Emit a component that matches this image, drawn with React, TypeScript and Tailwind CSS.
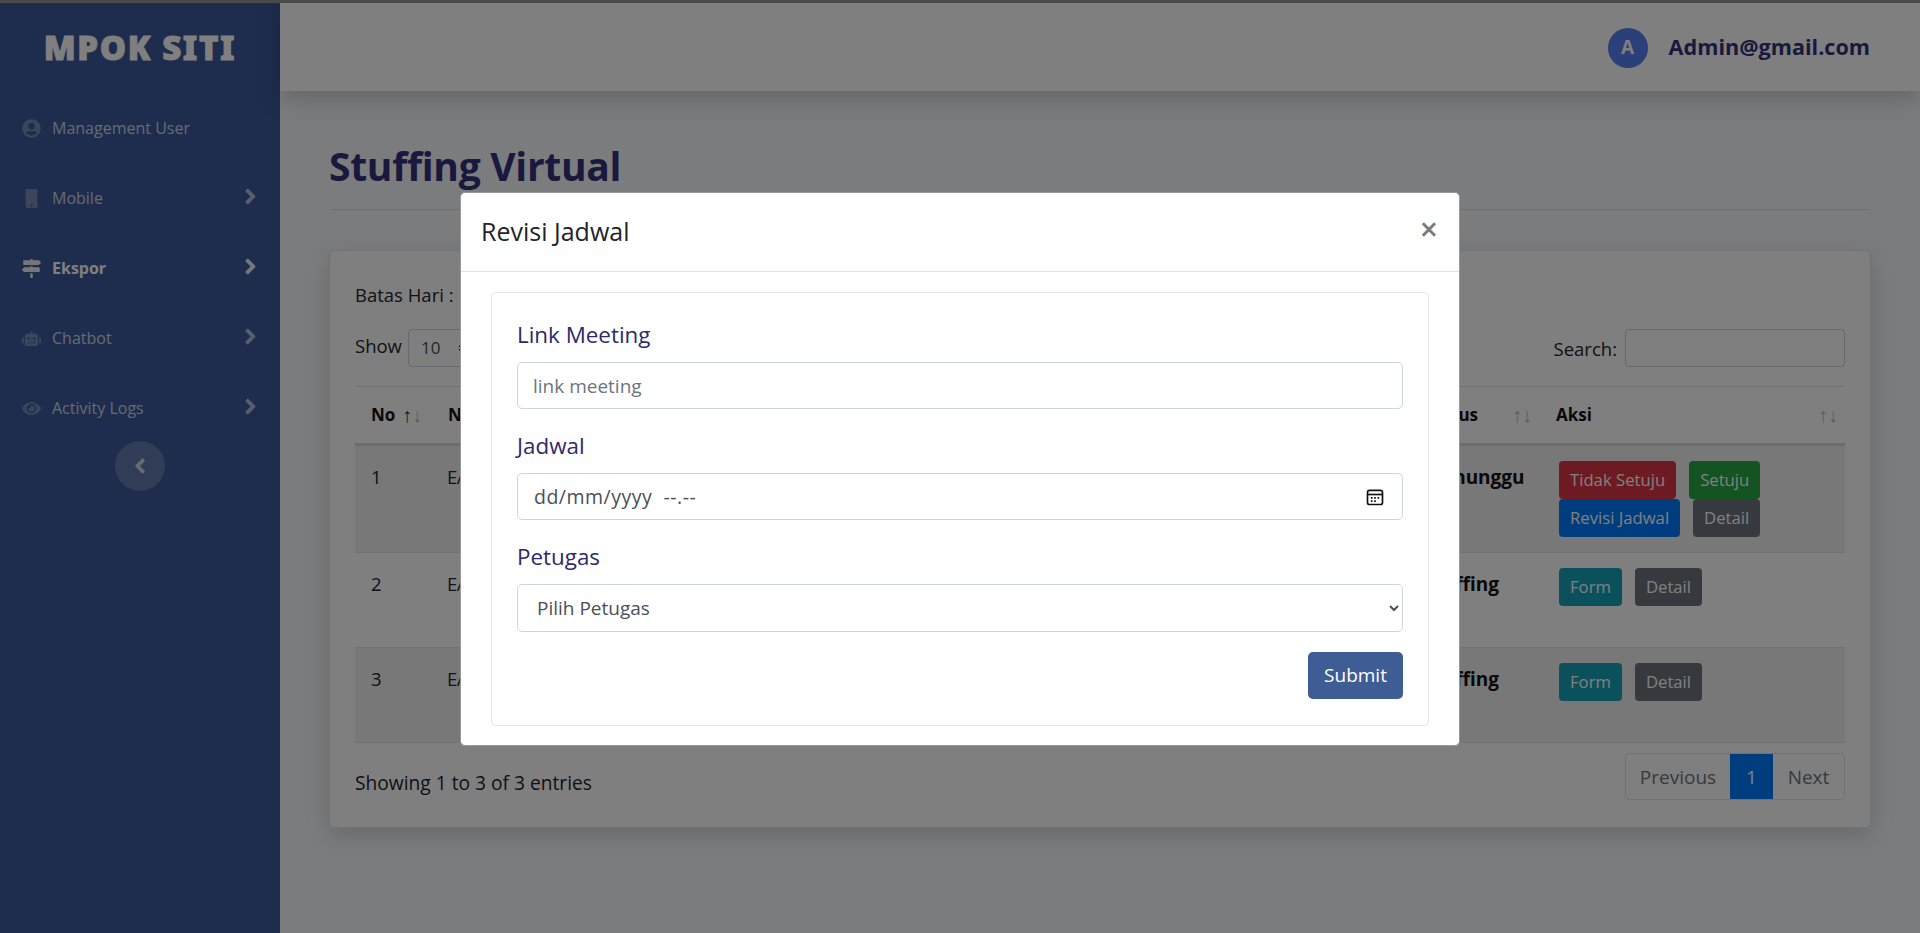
import React from "react";
import { FaUserCircle, FaMobile, FaMapSigns, FaRobot, FaEye, FaAngleRight, FaAngleLeft } from "react-icons/fa";
import { ChevronsUpDown } from "lucide-react";

const font = "[font-family:'Open_Sans','Noto_Sans',sans-serif]";

function NavItem({ icon, label, active, arrow = true }: { icon: React.ReactNode; label: string; active?: boolean; arrow?: boolean }) {
  return (
    <div className="flex h-[70px] items-center pl-[20px] pr-[17px]">
      <span className={`flex w-[22px] justify-center text-[19px] ${active ? "text-white/90" : "text-white/30"}`}>{icon}</span>
      <span className={`ml-[10px] flex-1 text-[16px] ${active ? "font-bold text-white" : "text-white/75"}`}>{label}</span>
      {arrow && <FaAngleRight className={`-mt-[3px] text-[25px] ${active ? "text-white/90" : "text-white/60"}`} />}
    </div>
  );
}

function Btn({ color, children }: { color: string; children: React.ReactNode }) {
  return (
    <span className={`ml-[3px] mr-[10px] inline-flex h-[38px] items-center rounded-[4px] px-[11px] text-[16.7px] text-white ${color}`}>{children}</span>
  );
}

function Sort({ active }: { active?: boolean }) {
  return (
    <span className="flex text-[20px] font-normal leading-none">
      <span className={active ? "text-[#333]" : "text-[#bbb]"}>↑</span>
      <span className="text-[#bbb]">↓</span>
    </span>
  );
}

function Row({ no, kode, status, striped, h, children }: { no: string; kode: string; status: string; striped?: boolean; h: string; children: React.ReactNode }) {
  return (
    <tr className={`border-b border-[#dee2e6] align-top ${h} ${striped ? "bg-[#f1f1f1]" : ""}`}>
      <td className="px-4 pt-[17px] text-[#212529]">{no}</td>
      <td className="pl-[15px] pt-[17px] tracking-[-0.6px] text-[#212529]">{kode}</td>
      <td className="pl-4 pt-[17px] text-[19px] font-bold text-[#111]">{status}</td>
      <td className="px-4 pt-[15px]">
        <div className="flex flex-wrap">{children}</div>
      </td>
    </tr>
  );
}

function Field({ label, children }: { label: string; children: React.ReactNode }) {
  return (
    <div>
      <div className="flex h-[28px] items-center text-[22.4px] font-medium text-[#2e2a6b]">{label}</div>
      <div className="mt-[13px]">{children}</div>
    </div>
  );
}

export default function App() {
  return (
    <div className={`relative h-[933px] w-[1920px] overflow-hidden bg-[#f6f8fb] ${font}`}>
      <div className="h-[3px] bg-[#8c8c8c]" />
      <div className="flex h-[930px]">
        <aside className="w-[280px] shrink-0 bg-[#3c5a9a]">
          <div className="flex h-[90px] items-center justify-center text-[33px] font-black tracking-[1.6px] text-white [-webkit-text-stroke:0.9px_white] [font-family:'Noto_Sans',sans-serif]">MPOK SITI</div>
          <nav className="mt-0">
            <NavItem icon={<FaUserCircle />} label="Management User" arrow={false} />
            <NavItem icon={<FaMobile />} label="Mobile" />
            <NavItem icon={<FaMapSigns />} label="Ekspor" active />
            <NavItem icon={<FaRobot />} label="Chatbot" />
            <NavItem icon={<FaEye />} label="Activity Logs" />
          </nav>
          <div className="mt-[-2px] flex justify-center">
            <div className="flex h-[50px] w-[50px] items-center justify-center rounded-full bg-white/20 text-[24px] text-white/70">
              <FaAngleLeft />
            </div>
          </div>
        </aside>

        <div className="min-w-0 flex-1">
          <header className="flex h-[88px] items-center justify-end bg-white pr-[50px] shadow-[0_8px_24px_rgba(0,0,0,0.18)]">
            <div className="mt-[1px] flex h-[40px] w-[40px] items-center justify-center rounded-full bg-[#567ef0] text-[19px] font-bold text-white">A</div>
            <div className="ml-[21px] text-[21.6px] font-bold text-[#34307a]">Admin@gmail.com</div>
          </header>

          <main className="px-[49px]">
            <div className="flex h-[119px] items-end border-b border-[#dfe1e6] pb-[18px]">
              <h1 className="text-[39px] font-bold leading-[50px] tracking-[-0.3px] text-[#34307a]">Stuffing Virtual</h1>
            </div>

            <section className="mt-[40px] h-[578px] rounded-[5px] border border-[#e3e6ec] bg-white px-[25px] shadow-[0_8px_24px_rgba(0,0,0,0.15)]">
              <div className="pt-[31px] text-[18.5px] leading-[26px] text-[#212529]">Batas Hari :</div>
              <div className="mt-[21px] flex h-[38px] items-center justify-between text-[18.5px] text-[#212529]">
                <div className="flex items-center">
                  <span className="-mt-[4px]">Show</span>
                  <div className="relative ml-[6px]">
                    <select className="h-[38px] w-[120px] appearance-none rounded-[4px] border border-[#ced4da] bg-white pl-[12px] text-[17px] text-[#495057]">
                      <option>10</option>
                    </select>
                    <ChevronsUpDown className="absolute left-[48px] top-[11px] h-[16px] w-[12px] text-[#333]" strokeWidth={3} />
                  </div>
                </div>
                <div className="flex items-center">
                  <span className="mt-[1px]">Search:</span>
                  <input className="ml-[8px] h-[38px] w-[220px] rounded-[4px] border border-[#ced4da] bg-white" />
                </div>
              </div>

              <table className="mt-[19px] w-full table-fixed border-collapse border-t border-[#dee2e6] text-[18.5px]">
                <colgroup>
                  <col className="w-[77px]" />
                  <col className="w-[976px]" />
                  <col className="w-[132px]" />
                  <col />
                </colgroup>
                <thead>
                  <tr className="h-[58px] border-b-[3px] border-[#d6d8db] text-left text-[17px] font-bold text-[#111]">
                    <th className="pl-4 pr-[10px]">
                      <div className="flex items-center justify-between"><span>No</span><Sort active /></div>
                    </th>
                    <th className="pl-4 pr-4"><div className="flex items-center justify-between"><span>Nomor Ekspor</span><Sort /></div></th>
                    <th className="pl-4 pr-[8px]"><div className="flex items-center justify-between"><span>Status</span><Sort /></div></th>
                    <th className="pl-4 pr-[7px]"><div className="flex items-center justify-between"><span>Aksi</span><Sort /></div></th>
                  </tr>
                </thead>
                <tbody>
                  <Row no="1" kode="E/2024/001" status="Menunggu" striped h="h-[108px]">
                    <Btn color="bg-[#dc3545]">Tidak Setuju</Btn>
                    <Btn color="bg-[#28a745]">Setuju</Btn>
                    <Btn color="bg-[#007bff]">Revisi Jadwal</Btn>
                    <Btn color="bg-[#6c757d]">Detail</Btn>
                  </Row>
                  <Row no="2" kode="E/2024/002" status="Stuffing" h="h-[95px]">
                    <Btn color="bg-[#17a2b8]">Form</Btn>
                    <Btn color="bg-[#6c757d]">Detail</Btn>
                  </Row>
                  <Row no="3" kode="E/2024/003" status="Stuffing" striped h="h-[95px]">
                    <Btn color="bg-[#17a2b8]">Form</Btn>
                    <Btn color="bg-[#6c757d]">Detail</Btn>
                  </Row>
                </tbody>
              </table>

              <div className="mt-[10px] flex items-start justify-between">
                <div className="pt-[16px] text-[19.2px] text-[#212529]">Showing 1 to 3 of 3 entries</div>
                <div className="flex h-[47px] w-[220px] overflow-hidden rounded-[4px] border border-[#dee2e6] text-[19px] text-[#6c757d]">
                  <span className="flex w-[104px] items-center justify-center pt-[2px]">Previous</span>
                  <span className="flex w-[43px] items-center justify-center bg-[#007bff] pt-[2px] text-white">1</span>
                  <span className="flex flex-1 items-center justify-center pt-[2px]">Next</span>
                </div>
              </div>
            </section>
          </main>
        </div>
      </div>

      <div className="absolute inset-0 flex justify-center bg-black/50 pt-[192px]">
        <div className="h-[554px] w-[1000px] rounded-[5px] border border-[#999] bg-white">
          <div className="flex h-[79px] items-center justify-between border-b border-[#dee2e6] pl-[20px] pr-[21px]">
            <h5 className="text-[25px] text-[#212529]">Revisi Jadwal</h5>
            <span className="-mt-[6px] text-[32px] font-semibold leading-none text-[#7a7a7a]">×</span>
          </div>
          <div className="mx-[30px] mt-[20px] h-[434px] rounded-[5px] border border-[#e3e6ea] px-[25px] pt-[28px]">
            <div className="flex flex-col gap-[23px]">
              <Field label="Link Meeting">
                <input
                  placeholder="link meeting"
                  className="h-[47px] w-full rounded-[5px] border border-[#ced4da] bg-white px-[15px] text-[19px] placeholder:text-[#6c757d]"
                />
              </Field>
              <Field label="Jadwal">
                <div className="flex h-[47px] w-full items-center justify-between rounded-[5px] border border-[#ced4da] bg-white pl-[16px] pr-[17px] text-[19.5px] tracking-[0.5px] text-[#495057]">
                  <span className="whitespace-pre">dd/mm/yyyy  --.--</span>
                  <svg width="20" height="20" viewBox="0 0 24 24" fill="none" stroke="#111" strokeWidth="2">
                    <rect x="3" y="4" width="18" height="17" rx="2.5" />
                    <path d="M3 9h18" />
                    <path d="M7 13h2M11 13h2M15 13h2M7 17h2M11 17h2" strokeWidth="2.2" />
                  </svg>
                </div>
              </Field>
              <Field label="Petugas">
                <select className="h-[48px] w-full rounded-[5px] border border-[#ced4da] bg-white px-[15px] text-[19px] text-[#495057]">
                  <option>Pilih Petugas</option>
                </select>
              </Field>
            </div>
            <div className="mt-[20px] flex justify-end">
              <button className="h-[47px] w-[95px] rounded-[5px] bg-[#3f5d95] text-[19px] text-white">Submit</button>
            </div>
          </div>
        </div>
      </div>
      <div className="absolute inset-x-0 top-0 h-[3px] bg-[#4a4a4a]" />
    </div>
  );
}
